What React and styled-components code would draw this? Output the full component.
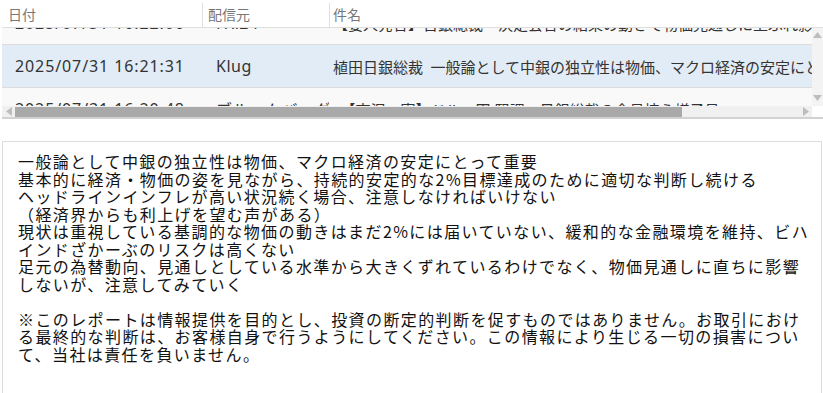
import React from "react";
import styled, { createGlobalStyle } from "styled-components";

const GlobalStyle = createGlobalStyle`
  body {
    margin: 0;
    overflow: hidden;
    background: #fff;
    font-family: "Noto Sans", "Noto Sans CJK JP", sans-serif;
  }
`;

const Page = styled.div`
  width: 823px;
  height: 393px;
  padding-left: 2px;
  box-sizing: border-box;
  overflow: hidden;
`;

const HeaderRow = styled.div`
  display: grid;
  grid-template-columns: 200px 127px 1fr;
  height: 28px;
  border-bottom: 1px solid #dedede;
  box-sizing: border-box;
  position: relative;
  z-index: 1;
  background: #fff;
`;

const HeaderCell = styled.div`
  display: flex;
  align-items: center;
  padding-left: ${(p) => p.$pad}px;
  font: 14px "Noto Sans CJK JP", sans-serif;
  color: #777;
  position: relative;
  ${(p) =>
    p.$sep &&
    `
    &::before {
      content: "";
      position: absolute;
      left: 0;
      top: 3px;
      bottom: 0;
      border-left: 1px solid #e0e0e0;
    }
  `}
`;

const ScrollArea = styled.div`
  display: grid;
  grid-template-columns: 1fr 11px;
  grid-template-rows: 78px 11px;
  border-bottom: 2px solid #d2d2d2;
`;

const Viewport = styled.div`
  overflow: hidden;
  background: #f9f9f9;
`;

const Rows = styled.div`
  width: 1100px;
`;

const Row = styled.div`
  display: grid;
  grid-template-columns: 200px 127px 1fr;
  height: 43px;
  border-bottom: 1px solid #dcdcdc;
  box-sizing: border-box;
  background: ${(p) => (p.$selected ? "#e2ecf6" : "#f9f9f9")};
`;

const Cell = styled.div`
  display: flex;
  align-items: center;
  padding-left: ${(p) => p.$pad}px;
  font-size: ${(p) => p.$size || 15}px;
  letter-spacing: ${(p) => p.$ls || 0}px;
  color: #333;
  white-space: nowrap;
  overflow: hidden;
`;

const VScroll = styled.div`
  background: #f3f3f3;
  display: flex;
  flex-direction: column;
  justify-content: space-between;
  align-items: center;
  padding: 3px 0 4px;
  box-sizing: border-box;
`;

const HScroll = styled.div`
  background: #f0f0f0;
  display: flex;
  align-items: center;
`;

const ArrowBox = styled.div`
  width: 13px;
  display: flex;
  justify-content: center;
  align-items: center;
`;

const Track = styled.div`
  flex: 1;
  height: 100%;
  display: flex;
  align-items: center;
`;

const Thumb = styled.div`
  height: 10px;
  background: #a9a9a9;
`;

const Corner = styled.div`
  background: #fff;
`;

const Panel = styled.div`
  margin-top: 22px;
  margin-right: 1px;
  height: 280px;
  border: 1px solid #dcdcdc;
  padding: 11px 8px 0 15px;
  font: 16px/17.5px "Noto Sans CJK JP", sans-serif;
  letter-spacing: 1.4px;
  color: #111;
`;

const Line = styled.div`
  min-height: 17.5px;
`;

const Tri = ({ dir }) => {
  const pts = {
    left: "7,0 7,9 1,4.5",
    right: "1,0 1,9 7,4.5",
    up: "0,7 9,7 4.5,1",
    down: "0,1 9,1 4.5,7",
  }[dir];
  const vertical = dir === "up" || dir === "down";
  return (
    <svg width={vertical ? 9 : 8} height={vertical ? 8 : 9}>
      <polygon points={pts} fill="#bdbdbd" />
    </svg>
  );
};

const rows = [
  {
    date: "2025/07/31 16:22:06",
    src: "FXi24",
    title: "【要人発言】日銀総裁「決定会合の結果の動きで物価見通しに上ぶれ影響の可能性」",
  },
  {
    date: "2025/07/31 16:21:31",
    src: "Klug",
    title: "植田日銀総裁\u2002一般論として中銀の独立性は物価、マクロ経済の安定にとって重要",
    selected: true,
  },
  {
    date: "2025/07/31 16:20:48",
    src: "ブルームバーグ",
    title: "\u2002【市況・寄】ドル・円 堅調、日銀総裁の会見控え様子見",
  },
];

const body = [
  "一般論として中銀の独立性は物価、マクロ経済の安定にとって重要",
  "基本的に経済・物価の姿を見ながら、持続的安定的な2%目標達成のために適切な判断し続ける",
  "ヘッドラインインフレが高い状況続く場合、注意しなければいけない",
  "（経済界からも利上げを望む声がある）",
  "現状は重視している基調的な物価の動きはまだ2%には届いていない、緩和的な金融環境を維持、ビハインドざかーぶのリスクは高くない",
  "足元の為替動向、見通しとしている水準から大きくずれているわけでなく、物価見通しに直ちに影響しないが、注意してみていく",
  "",
  "※このレポートは情報提供を目的とし、投資の断定的判断を促すものではありません。お取引における最終的な判断は、お客様自身で行うようにしてください。この情報により生じる一切の損害について、当社は責任を負いません。",
];

export default function App() {
  return (
    <Page>
      <GlobalStyle />
      <HeaderRow>
        <HeaderCell $pad={6}>日付</HeaderCell>
        <HeaderCell $pad={6} $sep>配信元</HeaderCell>
        <HeaderCell $pad={4} $sep>件名</HeaderCell>
      </HeaderRow>
      <ScrollArea>
        <Viewport>
          <Rows style={{ transform: "translateY(-26px)" }}>
            {rows.map((r) => (
              <Row key={r.date} $selected={r.selected}>
                <Cell $pad={13} $size={16} $ls={0.9}>{r.date}</Cell>
                <Cell $pad={14} $size={16} $ls={0.5}>{r.src}</Cell>
                <Cell $pad={4}>{r.title}</Cell>
              </Row>
            ))}
          </Rows>
        </Viewport>
        <VScroll>
          <Tri dir="up" />
          <Tri dir="down" />
        </VScroll>
        <HScroll>
          <ArrowBox>
            <Tri dir="left" />
          </ArrowBox>
          <Track>
            <Thumb style={{ width: "667px" }} />
          </Track>
          <ArrowBox>
            <Tri dir="right" />
          </ArrowBox>
        </HScroll>
        <Corner />
      </ScrollArea>
      <Panel>
        {body.map((t, i) => (
          <Line key={i}>{t}</Line>
        ))}
      </Panel>
    </Page>
  );
}
